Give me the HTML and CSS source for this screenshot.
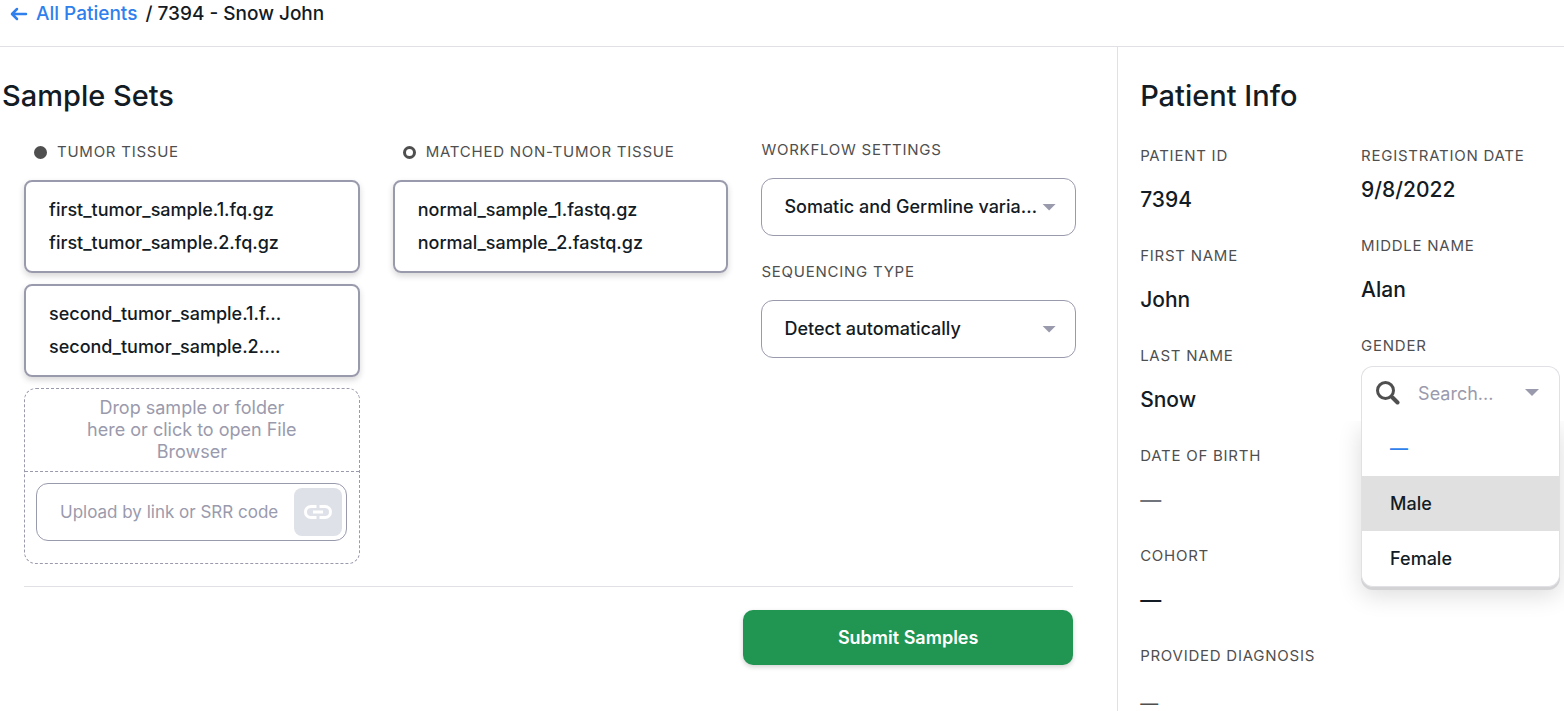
FILE: index.html
```html
<!DOCTYPE html>
<html lang="en">
<head>
<meta charset="utf-8">
<meta name="viewport" content="width=device-width, initial-scale=1">
<title>7394 - Snow John</title>
<link rel="stylesheet" href="styles.css">
</head>
<body class="app">
<header class="topbar">
  <nav class="breadcrumb" aria-label="Breadcrumb">
    <a class="breadcrumb-link" href="#patients">
      <svg class="back-icon" viewBox="0 0 18 14" aria-hidden="true"><path d="M16 7H2.500M7 2L2 7l5 5"/></svg>All Patients</a>
    <span>/ 7394 - Snow John</span>
  </nav>
</header>
<div class="layout">
  <main class="main">
    <h1 class="title main-title">Sample Sets</h1>
    <div class="sets">
      <section class="set">
        <h2 class="label set-label"><span class="dot dot-filled"></span>Tumor tissue</h2>
        <div class="samples">
          <div class="sample"><div class="file">first_tumor_sample.1.fq.gz</div><div class="file">first_tumor_sample.2.fq.gz</div></div>
          <div class="sample"><div class="file">second_tumor_sample.1.f...</div><div class="file">second_tumor_sample.2....</div></div>
          <div class="upload">
            <button class="drop" type="button"><span class="drop-text">Drop sample or folder here or click to open File Browser</span></button>
            <form class="link-form">
              <input class="link-input" type="text" aria-label="Upload by link or SRR code" placeholder="Upload by link or SRR code">
              <button class="link-button" type="button" aria-label="Upload link">
                <svg class="link-icon" viewBox="0 0 28 14" aria-hidden="true"><path d="M12.500 1.500H7a5.500 5.500 0 0 0 0 11h5.500M15.500 1.500H21a5.500 5.500 0 0 1 0 11h-5.500M9 7h10"/></svg>
              </button>
            </form>
          </div>
        </div>
      </section>
      <section class="set">
        <h2 class="label set-label"><span class="dot"></span>Matched non-tumor tissue</h2>
        <div class="samples">
          <div class="sample"><div class="file">normal_sample_1.fastq.gz</div><div class="file">normal_sample_2.fastq.gz</div></div>
        </div>
      </section>
      <section class="settings">
        <div class="setting">
          <label class="label" for="workflow">Workflow settings</label>
          <div class="select-box">
            <select class="select" id="workflow"><option>Somatic and Germline variants</option></select>
            <span class="caret"></span>
          </div>
        </div>
        <div class="setting">
          <label class="label" for="sequencing">Sequencing type</label>
          <div class="select-box">
            <select class="select" id="sequencing"><option>Detect automatically</option></select>
            <span class="caret"></span>
          </div>
        </div>
      </section>
    </div>
    <footer class="actions"><button class="submit" type="submit">Submit Samples</button></footer>
  </main>
  <aside class="sidebar">
    <h1 class="title">Patient Info</h1>
    <div class="info">
      <dl class="info-column">
        <div class="field"><dt class="label">Patient ID</dt><dd class="value">7394</dd></div>
        <div class="field"><dt class="label">First name</dt><dd class="value">John</dd></div>
        <div class="field"><dt class="label">Last name</dt><dd class="value">Snow</dd></div>
        <div class="field"><dt class="label">Date of birth</dt><dd class="value value-empty">—</dd></div>
        <div class="field"><dt class="label">Cohort</dt><dd class="value">—</dd></div>
        <div class="field"><dt class="label">Provided diagnosis</dt><dd class="value value-note">—</dd></div>
      </dl>
      <div class="info-column">
        <div class="field field-compact"><div class="label">Registration date</div><div class="value">9/8/2022</div></div>
        <div class="field"><div class="label">Middle name</div><div class="value">Alan</div></div>
        <div class="field field-compact">
          <label class="label" for="gender">Gender</label>
          <div class="combo">
            <div class="combo-head">
              <svg class="search-icon" viewBox="0 0 24 24" aria-hidden="true"><circle cx="9.500" cy="9.500" r="8"/><path class="search-handle" d="M16.500 16.500l5 5"/></svg>
              <input class="combo-input" id="gender" type="text" role="combobox" aria-expanded="true" aria-controls="gender-list" placeholder="Search...">
              <span class="caret"></span>
            </div>
            <div class="menu" id="gender-list" role="listbox">
              <button class="option option-selected" type="button" role="option" aria-selected="true">—</button>
              <button class="option option-active" type="button" role="option">Male</button>
              <button class="option" type="button" role="option">Female</button>
            </div>
          </div>
        </div>
      </div>
    </div>
  </aside>
</div>
</body>
</html>
```
FILE: styles.css
```css
*, *::before, *::after { box-sizing: border-box; }

.app {
  --ink: #131b24;
  --muted: #9a9aad;
  --gray: #4f4f4f;
  --blue: #2f80ed;
  --line: #e0e0e5;
  display: flex;
  flex-direction: column;
  height: 100vh;
  margin: 0;
  overflow: hidden;
  background: #fff;
  color: var(--ink);
  font: 500 18px/22px Inter, "Liberation Sans", sans-serif;
}

button, input, select { margin: 0; color: inherit; font: inherit; }
button { cursor: pointer; }

.topbar { padding: 3px 10px 21px; border-bottom: 1px solid var(--line); }
.breadcrumb { display: flex; gap: 8px; font-size: 19px; }
.breadcrumb-link { display: flex; align-items: center; gap: 8px; color: var(--blue); text-decoration: none; }
.back-icon { width: 18px; height: 14px; fill: none; stroke: currentColor; stroke-width: 2.500; stroke-linecap: round; stroke-linejoin: round; }

.layout { display: grid; grid-template-columns: 5fr 2fr; flex: 1; min-height: 0; }
.main { padding: 32px 41px 24px 24px; }
.title { margin: 0; font-size: 29px; font-weight: 500; line-height: 34px; }
.main-title { margin-left: -22px; }

.label { display: block; margin: 0; color: var(--gray); font-size: 15px; font-weight: 400; line-height: 20px; letter-spacing: 0.05em; text-transform: uppercase; }

.sets { display: grid; grid-template-columns: 16fr 16fr 15fr; gap: 33px; padding-top: 27px; }
.set { min-width: 0; padding-top: 2px; }
.set-label { display: flex; align-items: center; gap: 10px; padding-left: 10px; }
.dot { width: 13px; height: 13px; border: 3px solid var(--gray); border-radius: 50%; }
.dot-filled { background: var(--gray); }

.samples { display: flex; flex-direction: column; gap: 11px; padding-top: 18px; }
.sample { padding: 11px 23px 12px; border: 2px solid var(--muted); border-radius: 8px; box-shadow: 0 3px 6px rgb(0 0 0 / 16%); }
.file { overflow: hidden; line-height: 33px; text-overflow: ellipsis; white-space: nowrap; }

.upload { border: 1px dashed var(--muted); border-radius: 12px; }
.drop { display: block; width: 100%; padding: 8px 0; border: 0; border-bottom: 1px dashed var(--muted); background: none; color: var(--muted); font-weight: 400; }
.drop-text { display: block; max-width: 220px; margin: 0 auto; }
.link-form { display: flex; gap: 8px; margin: 11px 12px 22px 11px; padding: 4px; border: 1px solid var(--muted); border-radius: 12px; }
.link-input { flex: 1; min-width: 0; padding: 0 0 0 19px; border: 0; outline: 0; background: none; font-size: 17px; }
.link-input::placeholder { color: var(--muted); font-weight: 400; opacity: 1; }
.link-button { display: grid; place-items: center; width: 48px; height: 48px; padding: 0; border: 0; border-radius: 8px; background: #dfe1e9; color: #fff; }
.link-icon { width: 28px; height: 14px; fill: none; stroke: currentColor; stroke-width: 3; }

.settings { display: flex; flex-direction: column; gap: 26px; min-width: 0; }
.setting { display: grid; gap: 18px; }
.select-box { display: grid; align-items: center; }
.select-box > * { grid-area: 1 / 1; }
.select { width: 100%; height: 58px; padding: 0 34px 0 22px; border: 1px solid var(--muted); border-radius: 12px; appearance: none; background: none; text-overflow: ellipsis; }
.select-box .caret { justify-self: end; margin-right: 20px; }
.caret { flex: none; width: 14px; height: 7px; background: var(--muted); clip-path: polygon(0 0, 100% 0, 50% 100%); pointer-events: none; }

.actions { display: flex; justify-content: flex-end; margin: 22px 3px 0 0; padding-top: 23px; border-top: 1px solid var(--line); }
.submit { width: 330px; height: 55px; border: 0; border-radius: 10px; background: #219653; box-shadow: 0 2px 5px rgb(0 0 0 / 18%); color: #fff; font-weight: 600; }

.sidebar { padding: 32px 4px 0 22px; overflow: auto; border-left: 1px solid var(--line); scrollbar-width: none; }
.info { display: grid; grid-template-columns: minmax(0, 10fr) minmax(0, 9fr); padding-top: 33px; }
.info-column { display: flex; flex-direction: column; gap: 32px; margin: 0; }
.field { display: grid; grid-template-columns: minmax(0, 1fr); gap: 20px; }
.field-compact { gap: 10px; }
.value { margin: 0; font-size: 21px; line-height: 28px; }
.value-empty { opacity: 0.6; }
.value-note { color: var(--gray); font-size: 18px; font-weight: 400; line-height: 36px; }

.combo { position: relative; }
.combo-head { display: flex; align-items: center; gap: 18px; height: 55px; padding: 0 20px 3px 14px; border: 1px solid var(--line); border-bottom: 0; border-radius: 12px 12px 0 0; }
.search-icon { flex: none; width: 24px; height: 24px; fill: none; stroke: var(--gray); stroke-width: 3; stroke-linecap: round; }
.search-handle { stroke-width: 4; }
.combo-input { flex: 1; min-width: 0; padding: 2px 0 0; border: 0; outline: 0; background: none; }
.combo-input::placeholder { color: var(--muted); font-weight: 400; opacity: 1; }
.menu { position: absolute; inset: 100% 0 auto; overflow: hidden; border: 1px solid var(--line); border-top: 0; border-radius: 0 0 12px 12px; background: #fff; box-shadow: 0 3px 0 #d3d3d6, 0 8px 24px rgb(0 0 0 / 14%); clip-path: inset(0 -40px -40px); }
.option { display: block; width: 100%; height: 55px; padding: 0 28px; border: 0; background: none; text-align: left; }
.option-selected { color: var(--blue); }
.option-active { background: #e0e0e0; }
```
